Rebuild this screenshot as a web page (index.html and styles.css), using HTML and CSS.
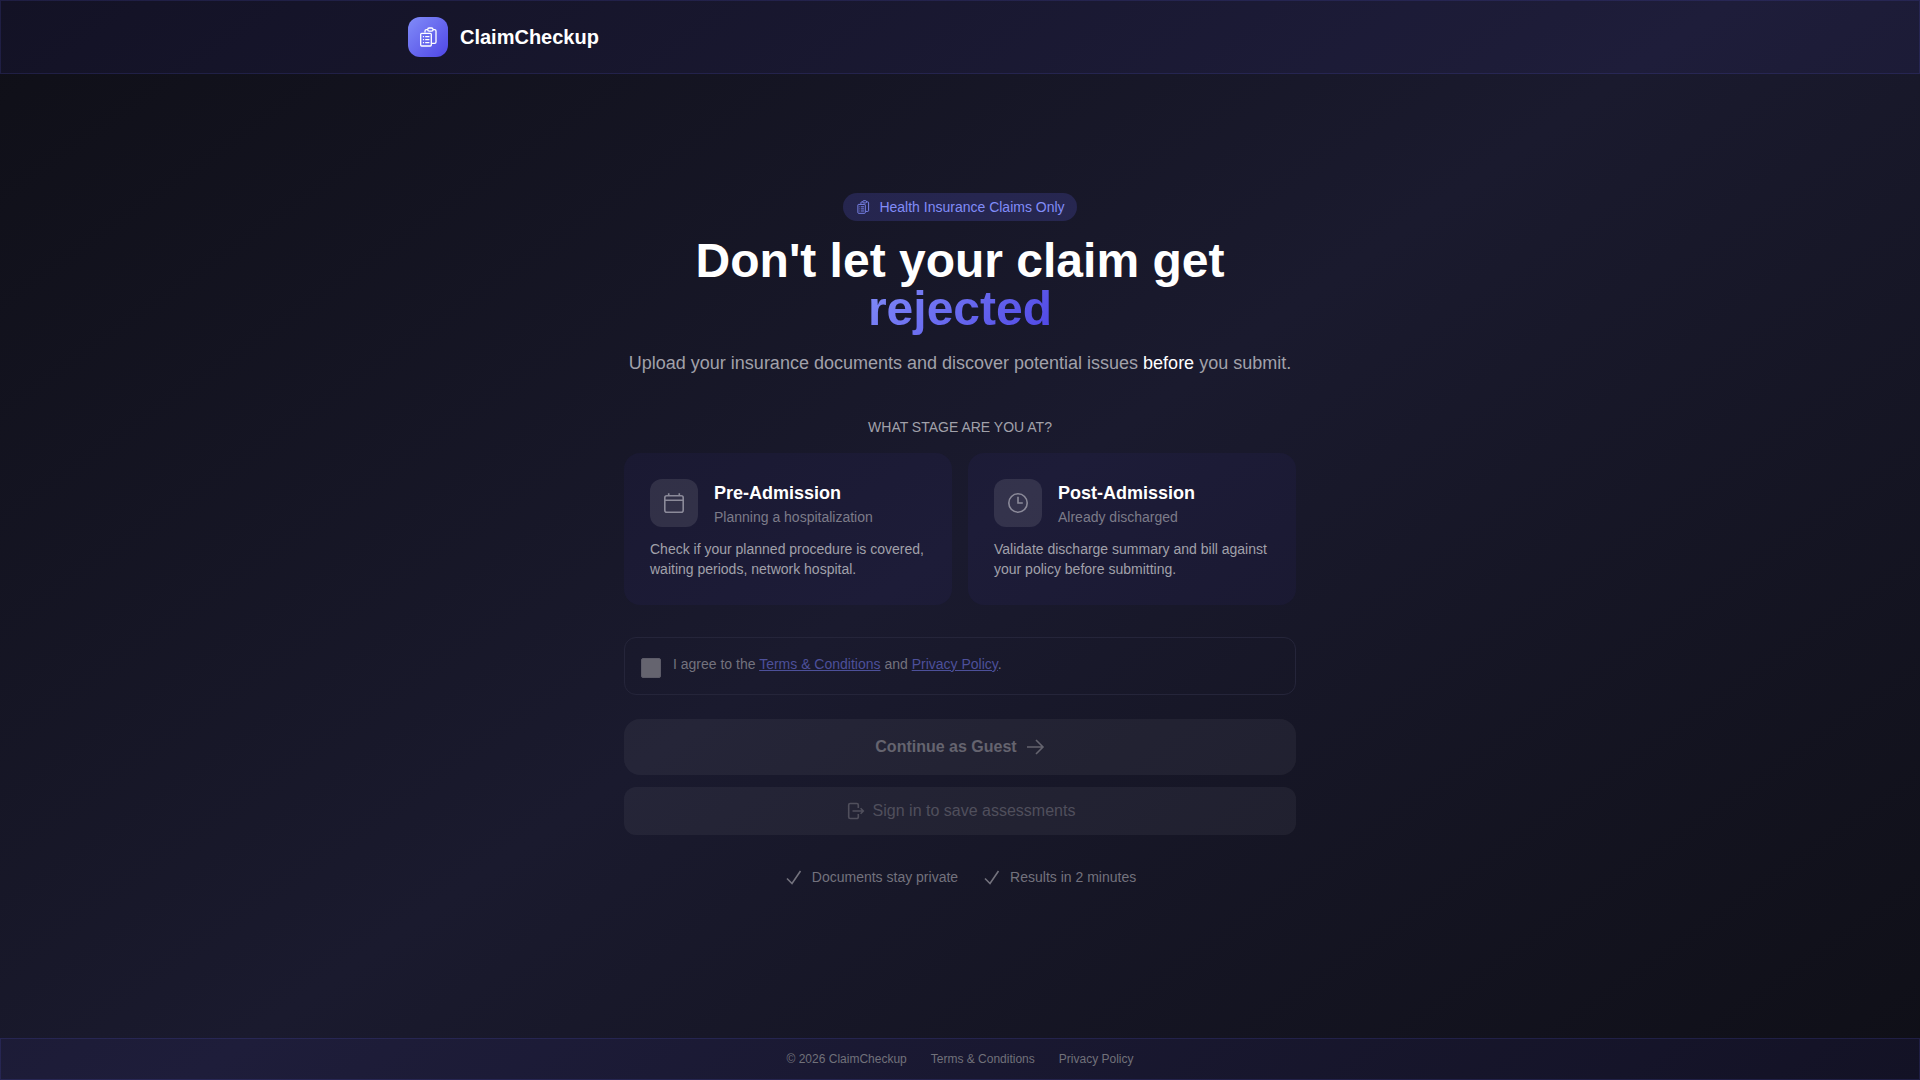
FILE: index.html
```html
<!DOCTYPE html>
<html lang="en">
<head>
    <meta charset="UTF-8">
    <meta name="viewport" content="width=device-width, initial-scale=1.0">
    <title>ClaimCheckup</title>
    <link rel="stylesheet" href="styles.css">
</head>
<body>
    <svg class="sprite" width="0" height="0" aria-hidden="true">
        <symbol id="documents" viewBox="0 0 20 20">
            <path d="M7 5.500V4a1.300 1.300 0 0 1 1.300-1.300H9.700M15 2.700h1.700A1.300 1.300 0 0 1 18 4v11a1.300 1.300 0 0 1-1.300 1.300H14"/>
            <rect x="9.700" y="1" width="5.300" height="3.200" rx="1.400"/>
            <rect x="2.700" y="6.300" width="10.600" height="12.700" rx="1"/>
            <path d="M4.900 9.700h1.200M4.900 12.700h1.200M4.900 15.700h1.200M7.200 9.700h4.200M7.200 12.700h4.200M7.200 15.700h4.200"/>
        </symbol>
    </svg>

    <header class="header glass">
        <div class="header-inner">
            <div class="logo">
                <svg width="20" height="20"><use href="#documents"/></svg>
            </div>
            <span class="brand">ClaimCheckup</span>
        </div>
    </header>

    <main class="main">
        <div class="container">
            <div class="hero">
                <div class="badge">
                    <svg width="14" height="14"><use href="#documents"/></svg>
                    <span>Health Insurance Claims Only</span>
                </div>
                <h1>Don't let your claim get <span class="gradient-text">rejected</span></h1>
                <p>Upload your insurance documents and discover potential issues <strong>before</strong> you submit.</p>
            </div>

            <h2 class="stage-label">What stage are you at?</h2>
            <div class="stages">
                <button type="button" class="stage">
                    <span class="stage-top">
                        <span class="stage-icon">
                            <svg width="24" height="24" viewBox="0 0 24 24">
                                <rect x="2.800" y="4.800" width="18.400" height="16.400" rx="2"/>
                                <path d="M2.800 9.200h18.400M6.700 2.300v2.500M17.300 2.300v2.500"/>
                            </svg>
                        </span>
                        <span>
                            <span class="stage-title">Pre-Admission</span>
                            <span class="stage-sub">Planning a hospitalization</span>
                        </span>
                    </span>
                    <span class="stage-text">Check if your planned procedure is covered, waiting periods, network hospital.</span>
                </button>
                <button type="button" class="stage">
                    <span class="stage-top">
                        <span class="stage-icon">
                            <svg width="24" height="24" viewBox="0 0 24 24">
                                <circle cx="12" cy="12" r="9.200"/>
                                <path d="M12 5.700V12h4.800"/>
                            </svg>
                        </span>
                        <span>
                            <span class="stage-title">Post-Admission</span>
                            <span class="stage-sub">Already discharged</span>
                        </span>
                    </span>
                    <span class="stage-text">Validate discharge summary and bill against your policy before submitting.</span>
                </button>
            </div>

            <div class="consent">
                <input type="checkbox" id="agree" disabled>
                <label for="agree">I agree to the <a href="#terms">Terms &amp; Conditions</a> and <a href="#privacy">Privacy Policy</a>.</label>
            </div>

            <div class="actions">
                <button type="button" class="btn btn-guest" disabled>
                    Continue as Guest
                    <svg width="20" height="20" viewBox="0 0 20 20">
                        <path d="M2 10h16M11 3l7 7-7 7"/>
                    </svg>
                </button>
                <button type="button" class="btn btn-signin" disabled>
                    <svg width="20" height="20" viewBox="0 0 20 20">
                        <path d="M13.300 7V4a1.500 1.500 0 0 0-1.500-1.500H5.200A1.500 1.500 0 0 0 3.700 4v12a1.500 1.500 0 0 0 1.500 1.500h6.600a1.500 1.500 0 0 0 1.500-1.500v-3M7.500 10H18M15.600 7.300L18.300 10l-2.700 2.700"/>
                    </svg>
                    Sign in to save assessments
                </button>
            </div>

            <ul class="perks">
                <li>
                    <svg width="20" height="20" viewBox="0 0 20 20"><path d="M3 11.500L8 16.500 16.500 4"/></svg>
                    Documents stay private
                </li>
                <li>
                    <svg width="20" height="20" viewBox="0 0 20 20"><path d="M3 11.500L8 16.500 16.500 4"/></svg>
                    Results in 2 minutes
                </li>
            </ul>
        </div>
    </main>

    <footer class="footer glass">
        <span>© 2026 ClaimCheckup</span>
        <a href="#terms">Terms &amp; Conditions</a>
        <a href="#privacy">Privacy Policy</a>
    </footer>
</body>
</html>
```

FILE: styles.css
```css
* {
    box-sizing: border-box;
    margin: 0;
    padding: 0;
}
body {
    min-height: 100vh;
    display: flex;
    flex-direction: column;
    font-family: "Liberation Sans", Arial, sans-serif;
    font-size: 14px;
    line-height: 20px;
    color: #fff;
    background: linear-gradient(145deg, #0f0f17 0%, #1a1a2e 50%, #0f0f17 100%);
}
svg {
    display: block;
    flex-shrink: 0;
    fill: none;
    stroke: currentColor;
    stroke-width: 1.6;
}
.sprite {
    position: absolute;
}
button {
    font: inherit;
    color: inherit;
    border: none;
}

/* translucent bars */
.glass {
    background: rgba(79, 70, 229, 0.07);
    border: 1px solid rgba(99, 102, 241, 0.15);
}
.header-inner {
    max-width: 1152px;
    margin: 0 auto;
    padding: 16px 24px;
    display: flex;
    align-items: center;
    gap: 12px;
}
.logo {
    width: 40px;
    height: 40px;
    border-radius: 12px;
    display: flex;
    align-items: center;
    justify-content: center;
    background: linear-gradient(135deg, #818cf8, #4f46e5);
}
.logo svg {
    stroke-width: 1.3;
}
.brand {
    font-size: 20px;
    line-height: 28px;
    font-weight: bold;
}

.main {
    flex: 1;
    display: flex;
    align-items: center;
    justify-content: center;
    padding: 0 24px 32px;
}
.container {
    width: 100%;
    max-width: 672px;
}
.hero {
    display: flex;
    flex-direction: column;
    align-items: center;
    gap: 16px;
    text-align: center;
}
.badge {
    display: flex;
    align-items: center;
    gap: 8px;
    padding: 4px 12px;
    border-radius: 14px;
    color: #818cf8;
    background: rgba(99, 102, 241, 0.2);
}
.badge svg {
    margin: 0 1px;
    stroke-width: 1.3;
}
h1 {
    font-size: 48px;
    line-height: 48px;
}
.gradient-text {
    color: transparent;
    background: linear-gradient(135deg, #818cf8, #4f46e5);
    background-clip: text;
    -webkit-background-clip: text;
}
.hero p {
    font-size: 18px;
    line-height: 28px;
    color: #a1a1aa;
}
.hero strong {
    font-weight: normal;
    color: #fff;
}

.stage-label {
    margin: 40px 0 16px;
    font-size: 14px;
    font-weight: normal;
    text-align: center;
    text-transform: uppercase;
    color: #a1a1aa;
}
.stages {
    display: grid;
    grid-template-columns: 1fr 1fr;
    gap: 16px;
}
.stage {
    padding: 26px;
    border-radius: 16px;
    text-align: left;
    background: rgba(79, 70, 229, 0.06);
    cursor: pointer;
}
.stage-top {
    display: flex;
    align-items: center;
    gap: 16px;
    margin-bottom: 12px;
}
.stage-icon {
    width: 48px;
    height: 48px;
    border-radius: 12px;
    display: flex;
    align-items: center;
    justify-content: center;
    color: #8b8a99;
    background: rgba(255, 255, 255, 0.1);
}
.stage-title,
.stage-sub,
.stage-text {
    display: block;
}
.stage-title {
    font-size: 18px;
    line-height: 28px;
    font-weight: bold;
}
.stage-sub {
    color: #7c7b89;
}
.stage-text {
    color: #a1a1aa;
}

.consent {
    margin: 32px 0 24px;
    padding: 16px;
    display: flex;
    align-items: flex-start;
    gap: 12px;
    border: 1px solid #25253a;
    border-radius: 12px;
    color: #73727d;
}
.consent input {
    appearance: none;
    width: 20px;
    height: 20px;
    margin-top: 4px;
    border: 1px solid #5c5b68;
    border-radius: 2px;
    background: #65646f;
}
.consent a {
    color: #4d509a;
}

.actions {
    display: flex;
    flex-direction: column;
    gap: 12px;
}
.btn {
    display: flex;
    align-items: center;
    justify-content: center;
    gap: 8px;
    font-size: 16px;
    line-height: 24px;
    background: rgba(255, 255, 255, 0.05);
}
.btn-guest {
    padding: 16px;
    border-radius: 16px;
    font-weight: bold;
    color: #65646f;
}
.btn-signin {
    padding: 12px;
    border-radius: 12px;
    color: #504f5c;
}

.perks {
    margin-top: 32px;
    display: flex;
    justify-content: center;
    gap: 24px;
    list-style: none;
    color: #73727d;
}
.perks li {
    display: flex;
    gap: 8px;
}

.footer {
    padding: 12px 24px;
    display: flex;
    justify-content: center;
    gap: 24px;
    font-size: 12px;
    line-height: 16px;
    color: #71717a;
}
.footer a {
    color: inherit;
    text-decoration: none;
}
```
